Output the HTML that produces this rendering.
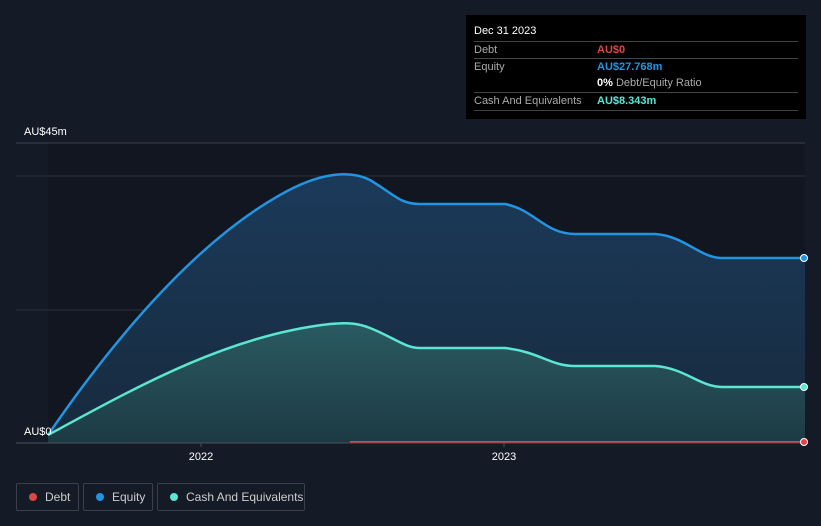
<!DOCTYPE html><html><head><style>
body{margin:0;background:#151b26;font-family:"Liberation Sans",sans-serif;width:821px;height:526px;overflow:hidden;position:relative}
.tip{position:absolute;left:466px;top:15px;width:340px;height:104px;background:#000;color:#fff;font-size:11px}
.row{position:absolute;left:8px;width:324px;border-top:1px solid #444;height:17px;line-height:17px}
.l{color:#aaa;position:absolute;left:0}.v{position:absolute;left:123px;font-weight:bold}
.leg{position:absolute;top:483px;height:26px;border:1px solid #3a404c;border-radius:2px;color:#ccc;font-size:12px;line-height:26px}
.leg i{position:absolute;left:12px;top:9px;width:8px;height:8px;border-radius:50%}
</style></head><body>
<svg width="821" height="526" style="position:absolute;left:0;top:0">
<defs><linearGradient id="g" x1="0" y1="0" x2="0" y2="1"><stop offset="0" stop-color="#1b3a5a"/><stop offset="1" stop-color="#172a3d"/></linearGradient>
<linearGradient id="c" x1="0" y1="0" x2="0" y2="1"><stop offset="0" stop-color="#2a5a62"/><stop offset="1" stop-color="#1d3a44"/></linearGradient></defs>
<rect x="48" y="143" width="757" height="300" fill="#111620"/>
<line x1="16" y1="143" x2="805" y2="143" stroke="#3a404c"/>
<line x1="16" y1="176" x2="805" y2="176" stroke="#2a303a"/>
<line x1="16" y1="310" x2="805" y2="310" stroke="#2a303a"/>
<path d="M48 435 C120 330,200 240,280 195 C320 172,350 170,370 180 C395 195,400 204,420 204 L505 204 C535 210,545 234,575 234 L655 234 C685 236,700 258,722 258 L805 258 L805 443 L48 443Z" fill="url(#g)"/>
<path d="M48 435 C140 385,230 335,330 324 C350 322,360 324,370 328 C395 338,405 348,420 348 L505 348 C540 352,550 366,575 366 L655 366 C685 368,700 387,722 387 L805 387 L805 443 L48 443Z" fill="url(#c)"/>
<path d="M48 435 C120 330,200 240,280 195 C320 172,350 170,370 180 C395 195,400 204,420 204 L505 204 C535 210,545 234,575 234 L655 234 C685 236,700 258,722 258 L805 258" fill="none" stroke="#2394e0" stroke-width="2.5"/>
<path d="M48 435 C140 385,230 335,330 324 C350 322,360 324,370 328 C395 338,405 348,420 348 L505 348 C540 352,550 366,575 366 L655 366 C685 368,700 387,722 387 L805 387" fill="none" stroke="#5ce6d2" stroke-width="2.5"/>
<line x1="350" y1="442" x2="805" y2="442" stroke="#e04545" stroke-width="2"/>
<line x1="16" y1="443" x2="805" y2="443" stroke="#4a505c"/>
<line x1="201" y1="443" x2="201" y2="447" stroke="#4a505c"/><line x1="504" y1="443" x2="504" y2="447" stroke="#4a505c"/>
<circle cx="804" cy="258" r="3.5" fill="#2394e0" stroke="#fff" stroke-width="1"/>
<circle cx="804" cy="387" r="3.5" fill="#5ce6d2" stroke="#fff" stroke-width="1"/>
<circle cx="804" cy="442" r="3.5" fill="#e04545" stroke="#fff" stroke-width="1"/>
<text x="24" y="135" fill="#fff" font-size="11">AU$45m</text>
<text x="24" y="435" fill="#fff" font-size="11">AU$0</text>
<text x="201" y="460" fill="#fff" font-size="11" text-anchor="middle">2022</text>
<text x="504" y="460" fill="#fff" font-size="11" text-anchor="middle">2023</text>
</svg>
<div class="tip">
<div style="position:absolute;left:8px;top:10px;font-size:11px">Dec 31 2023</div>
<div class="row" style="top:26px"><span class="l">Debt</span><span class="v" style="color:#e04545">AU$0</span></div>
<div class="row" style="top:43px"><span class="l">Equity</span><span class="v" style="color:#2394e0">AU$27.768m</span></div>
<div class="row" style="top:60px;border:0"><span class="v" style="color:#fff">0% <span style="color:#aaa;font-weight:normal">Debt/Equity Ratio</span></span></div>
<div class="row" style="top:77px"><span class="l">Cash And Equivalents</span><span class="v" style="color:#5ce6d2">AU$8.343m</span></div>
<div class="row" style="top:95px;height:0"></div>
</div>
<div class="leg" style="left:16px;width:61px"><i style="background:#e04545"></i><span style="position:absolute;left:28px">Debt</span></div>
<div class="leg" style="left:83px;width:68px"><i style="background:#2394e0"></i><span style="position:absolute;left:28px">Equity</span></div>
<div class="leg" style="left:157px;width:146px"><i style="background:#5ce6d2"></i><span style="position:absolute;left:28px">Cash And Equivalents</span></div>
</body></html>
